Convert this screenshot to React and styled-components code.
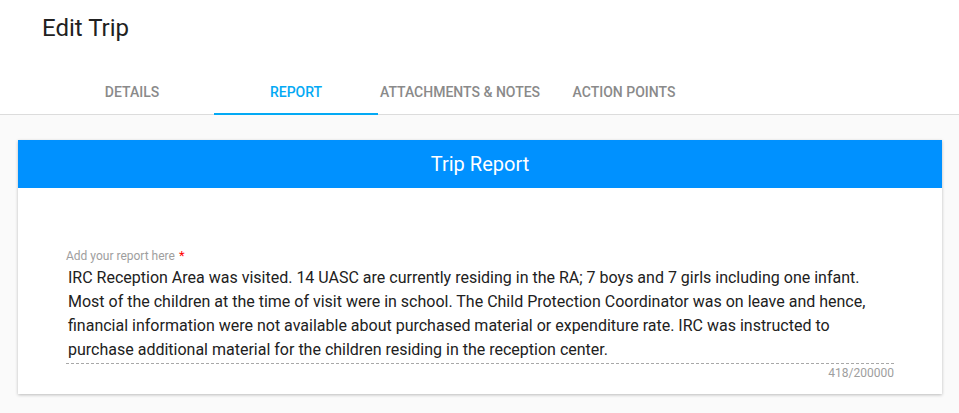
import React from 'react';
import styled, { createGlobalStyle } from 'styled-components';

const GlobalStyle = createGlobalStyle`
  html, body {
    margin: 0;
    padding: 0;
    background: #fafafa;
    font-family: Roboto, 'Noto Sans', sans-serif;
  }
`;

const Page = styled.div`
  min-height: 413px;
  background: #fafafa;
`;

const TopBar = styled.header`
  background: #ffffff;
  border-bottom: 1px solid #dcdcdc;
`;

const Title = styled.h1`
  margin: 0;
  padding: 14px 0 0 42px;
  height: 53px;
  box-sizing: border-box;
  font-size: 24px;
  font-weight: 400;
  color: #212121;
  line-height: 28px;
`;

const Tabs = styled.nav`
  display: flex;
  padding-left: 50px;
`;

const Tab = styled.div`
  width: 164px;
  height: 62px;
  box-sizing: border-box;
  display: flex;
  align-items: center;
  justify-content: center;
  padding-top: 18px;
  font-size: 14px;
  font-weight: 500;
  text-transform: uppercase;
  color: ${p => (p.$active ? '#03a9f4' : '#8a8a8a')};
  border-bottom: 2px solid ${p => (p.$active ? '#03a9f4' : 'transparent')};
  margin-bottom: -1px;
`;

const Content = styled.main`
  padding: 25px 17px 0 18px;
`;

const Card = styled.section`
  background: #ffffff;
  box-shadow: 0 1px 3px rgba(0, 0, 0, 0.25);
`;

const CardHeader = styled.div`
  height: 48px;
  background: #0091ff;
  color: #ffffff;
  font-size: 20px;
  display: flex;
  align-items: center;
  justify-content: center;
`;

const CardBody = styled.div`
  padding: 61px 48px 14px 48px;
`;

const Label = styled.div`
  font-size: 12px;
  color: #9e9e9e;
  line-height: 14px;
`;

const Star = styled.span`
  color: #f00;
  margin-left: 4px;
  font-size: 13px;
`;

const ReportText = styled.div`
  margin-top: 3px;
  padding: 0 2px 1px;
  font-size: 16px;
  line-height: 24px;
  color: #212121;
  border-bottom: 1px dashed #a8a8a8;
`;

const Counter = styled.div`
  text-align: right;
  font-size: 12px;
  color: #9e9e9e;
  margin-top: 2px;
`;

const tabs = ['Details', 'Report', 'Attachments & Notes', 'Action Points'];

const report =
  'IRC Reception Area was visited. 14 UASC are currently residing in the RA; 7 boys and 7 girls including one infant. Most of the children at the time of visit were in school. The Child Protection Coordinator was on leave and hence, financial information were not available about purchased material or expenditure rate. IRC was instructed to purchase additional material for the children residing in the reception center.';

const App = () => (
  <Page>
    <GlobalStyle />
    <TopBar>
      <Title>Edit Trip</Title>
      <Tabs>
        {tabs.map(t => (
          <Tab key={t} $active={t === 'Report'}>{t}</Tab>
        ))}
      </Tabs>
    </TopBar>
    <Content>
      <Card>
        <CardHeader>Trip Report</CardHeader>
        <CardBody>
          <Label>
            Add your report here<Star>*</Star>
          </Label>
          <ReportText>{report}</ReportText>
          <Counter>418/200000</Counter>
        </CardBody>
      </Card>
    </Content>
  </Page>
);

export default App;
